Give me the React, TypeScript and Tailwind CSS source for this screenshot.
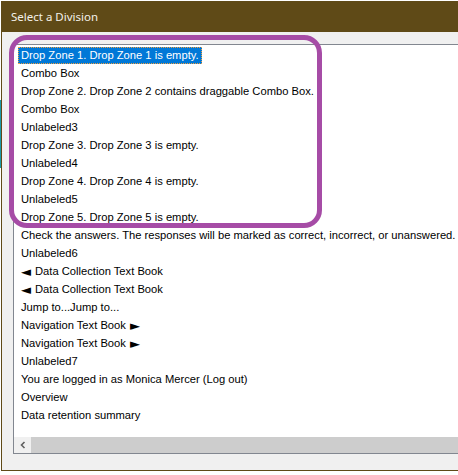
import React from "react";

type Row = { text: string; pre?: boolean; post?: boolean };

const rows: Row[] = [
  { text: "Drop Zone 1. Drop Zone 1 is empty." },
  { text: "Combo Box" },
  { text: "Drop Zone 2. Drop Zone 2 contains draggable Combo Box." },
  { text: "Combo Box" },
  { text: "Unlabeled3" },
  { text: "Drop Zone 3. Drop Zone 3 is empty." },
  { text: "Unlabeled4" },
  { text: "Drop Zone 4. Drop Zone 4 is empty." },
  { text: "Unlabeled5" },
  { text: "Drop Zone 5. Drop Zone 5 is empty." },
  { text: "Check the answers. The responses will be marked as correct, incorrect, or unanswered." },
  { text: "Unlabeled6" },
  { text: "Data Collection Text Book", pre: true },
  { text: "Data Collection Text Book", pre: true },
  { text: "Jump to...Jump to..." },
  { text: "Navigation Text Book", post: true },
  { text: "Navigation Text Book", post: true },
  { text: "Unlabeled7" },
  { text: "You are logged in as Monica Mercer (Log out)" },
  { text: "Overview" },
  { text: "Data retention summary" },
];

export default function App() {
  return (
    <div className="relative w-[458px] h-[475px] bg-white overflow-hidden">
      <div className="absolute left-0 top-[100px] w-[1px] h-[68px] bg-[#1a9aa8]" />
      <div className="ml-[1px] mt-[1px] w-[600px] h-[470px] border-l border-b border-[#5f4a17] bg-[#f0f0f0] flex flex-col">
        <div
          className="h-[31px] bg-[#5f4a17] text-[#f4f1ea] text-[11.5px] pl-[9px] flex items-center"
          style={{ fontFamily: '"Noto Sans", "Open Sans", sans-serif' }}
        >
          Select a Division
        </div>
        <div className="pt-[12px] pl-[11px]">
          <div
            className="w-[700px] h-[410px] border border-[#828790] bg-white flex flex-col"
            style={{ fontFamily: '"Liberation Sans", Arial, sans-serif' }}
          >
            <div className="flex-1 pt-[1px] pl-[4px]">
              {rows.map((r, i) => (
                <div key={i} className="h-[18px] flex items-center">
                  <span
                    className={
                      i === 0
                        ? "h-[17px] flex items-center px-[3px] bg-[#0078d7] text-white text-[11.2px] outline-1 outline-dotted outline-[#f0a040] -outline-offset-1 whitespace-nowrap"
                        : "h-[17px] flex items-center px-[3px] text-black text-[11.2px] whitespace-nowrap"
                    }
                  >
                    {r.pre && (
                      <span
                        className="text-[13px] mr-[4px] leading-none"
                        style={{ fontFamily: '"DejaVu Sans", sans-serif' }}
                      >
                        {"\u25C4"}
                      </span>
                    )}
                    {r.text}
                    {r.post && (
                      <span
                        className="text-[13px] ml-[4px] leading-none"
                        style={{ fontFamily: '"DejaVu Sans", sans-serif' }}
                      >
                        {"\u25BA"}
                      </span>
                    )}
                  </span>
                </div>
              ))}
            </div>
            <div className="h-[16px] flex">
              <div className="w-[17px] h-full bg-[#f0f0f0] flex items-center justify-center">
                <svg width="8" height="8" viewBox="0 0 8 8">
                  <path d="M5.5 1 L2.5 4 L5.5 7" stroke="#606060" strokeWidth="1.6" fill="none" />
                </svg>
              </div>
              <div className="flex-1 bg-[#cdcdcd]" />
            </div>
          </div>
        </div>
      </div>
      <div className="absolute left-[9px] top-[35px] w-[313px] h-[193px] border-[5px] border-[#a64ca6] rounded-[18px] pointer-events-none" />
    </div>
  );
}
